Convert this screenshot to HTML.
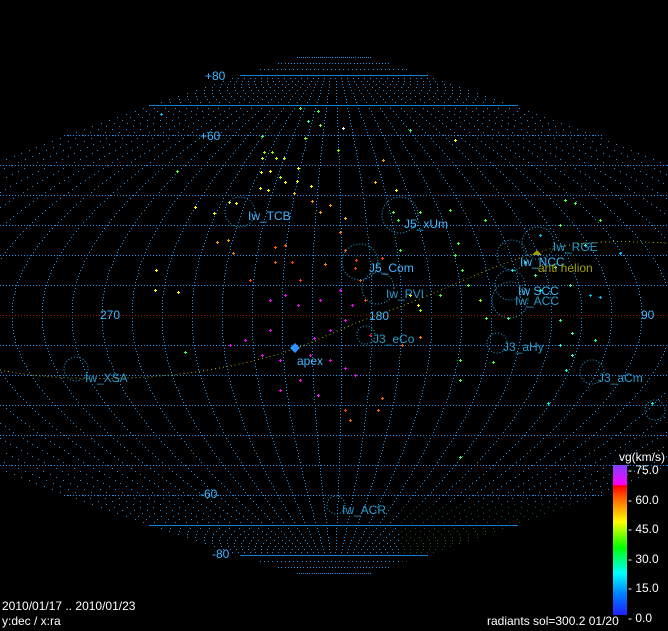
<!DOCTYPE html>
<html><head><meta charset="utf-8"><style>
html,body{margin:0;padding:0;background:#000;}
body{width:668px;height:631px;overflow:hidden;position:relative;font-family:"Liberation Sans",sans-serif;}
svg{position:absolute;left:0;top:0;}
text{font-family:"Liberation Sans",sans-serif;font-size:12px;}
</style></head><body>
<svg id="s" width="668" height="631" xmlns="http://www.w3.org/2000/svg" shape-rendering="crispEdges">
<defs><linearGradient id="cb" x1="0" y1="0" x2="0" y2="1">
<stop offset="0" stop-color="#8040ff"/><stop offset="0.13" stop-color="#ff00ff"/>
<stop offset="0.14" stop-color="#ff0000"/><stop offset="0.22" stop-color="#ff6000"/>
<stop offset="0.38" stop-color="#ffff00"/><stop offset="0.55" stop-color="#00ff00"/>
<stop offset="0.72" stop-color="#00ffff"/><stop offset="0.86" stop-color="#0080ff"/>
<stop offset="1" stop-color="#2020ff"/></linearGradient></defs>
<g id="grid"></g>
<path d="M0,370 C60,382 150,382 230,366 S320,335 380,314 S470,275 520,258 S600,240 668,243" fill="none" stroke="#a0a000" stroke-width="1" stroke-dasharray="1 3"/>
<g id="pts"></g>
<g fill="none" stroke="#20a8e0" stroke-dasharray="1 2" shape-rendering="auto">
<circle cx="240" cy="212" r="15"/><circle cx="400" cy="215" r="18"/><circle cx="538" cy="243" r="16"/>
<circle cx="512" cy="255" r="15"/><circle cx="360" cy="262" r="18"/><circle cx="378" cy="288" r="16"/>
<circle cx="510" cy="285" r="15"/><circle cx="510" cy="300" r="18"/><circle cx="366" cy="335" r="9"/>
<circle cx="497" cy="343" r="10"/><circle cx="592" cy="372" r="12"/><circle cx="76" cy="369" r="12"/>
<circle cx="336" cy="505" r="9"/><circle cx="655" cy="410" r="10"/>
</g>
<polygon points="532,255 537,250 542,255" fill="#a0a000" shape-rendering="auto"/>
<polygon points="295,343 300,348 295,353 290,348" fill="#3090ff" shape-rendering="auto"/>
<g fill="#40b8ff">
<text x="248" y="220">Iw_TCB</text><text x="404" y="228">J5_xUm</text>
<text x="520" y="266">Iw_NCC</text><text x="369" y="272">J5_Com</text>
<text x="518" y="295">Iw SCC</text><text x="297" y="365">apex</text>
<text x="205" y="80">+80</text><text x="200" y="140">+60</text>
<text x="100" y="319">270</text><text x="369" y="320">180</text><text x="641" y="319">90</text>
<text x="200" y="498">-60</text><text x="212" y="558">-80</text>
</g>
<g fill="#2898c8">
<text x="553" y="251">Iw_RGE</text><text x="386" y="298">Iw_PVI</text><text x="515" y="305">Iw_ACC</text>
<text x="373" y="343">J3_eCo</text><text x="503" y="351">J3_aHy</text><text x="598" y="382">J3_aCm</text>
<text x="85" y="382">Iw_XSA</text><text x="342" y="514">Iw_ACR</text>
</g>
<text x="538" y="272" fill="#a0a000">anti helion</text>
<rect x="613" y="465" width="14" height="150" fill="url(#cb)"/>
<g fill="#fff">
<text x="619" y="461">vg(km/s)</text>
<text x="628" y="474">- 75.0</text><text x="628" y="504">- 60.0</text><text x="628" y="533">- 45.0</text>
<text x="628" y="563">- 30.0</text><text x="628" y="592">- 15.0</text><text x="628" y="622">- 0.0</text>
<text x="2" y="610">2010/01/17 .. 2010/01/23</text><text x="2" y="625">y:dec / x:ra</text>
<text x="487" y="625">radiants sol=300.2 01/20</text>
</g>
</svg>
<script>
var g=document.getElementById('grid'),h='';
var C='#1890f0';
function P(ra,dec){var d=ra-192.5;while(d>180)d-=360;while(d<-180)d+=360;return [334-3*d*Math.cos(dec*Math.PI/180),315-3*dec];}
for(var ra=0;ra<360;ra+=10){for(var dec=-87;dec<=87;dec+=1){if(Math.abs(dec)>80&&dec%2)continue;var p=P(ra,dec);if(p[0]<0||p[0]>667)continue;h+='<rect x="'+Math.round(p[0])+'" y="'+p[1]+'" width="1" height="1" fill="'+(dec<-62&&p[0]>400?'#106020':C)+'"/>';}}
for(var dec=-80;dec<=80;dec+=10){var y=315-3*dec,w=540*Math.cos(dec*Math.PI/180),x0=Math.max(0,334-w),x1=Math.min(668,334+w);
if(Math.abs(dec)>=70){h+='<rect x="'+x0.toFixed(0)+'" y="'+y+'" width="'+(x1-x0).toFixed(0)+'" height="1" fill="#1080d0"/>';}
else{for(var x=x0;x<x1;x+=3)h+='<rect x="'+x.toFixed(0)+'" y="'+y+'" width="1" height="1" fill="'+(dec==0?'#a01010':C)+'"/>';}}
g.innerHTML=h;
var pts=[[300,108,'#40ff40'],[318,111,'#40ff40'],[161,114,'#00c0ff'],[308,121,'#40ff80'],[320,125,'#80ff40'],[262,136,'#40ff40'],[305,138,'#80ff00'],[264,152,'#80ff00'],[272,152,'#80ff00'],[276,158,'#c0ff00'],[284,158,'#c0ff00'],[262,158,'#c0ff00'],[177,171,'#40ff40'],[261,172,'#ffff00'],[270,171,'#ffff00'],[280,177,'#c0ff00'],[285,182,'#ffff00'],[297,181,'#ffff00'],[298,168,'#ffff00'],[311,186,'#ffff00'],[260,188,'#ffff00'],[268,190,'#ffff00'],[294,193,'#ffc000'],[312,201,'#ffa000'],[229,202,'#ffff00'],[214,213,'#ffff00'],[236,203,'#ffff00'],[195,207,'#ffff00'],[217,242,'#ffa000'],[228,240,'#ffa000'],[233,253,'#ff8000'],[275,247,'#ff6000'],[285,245,'#ff6000'],[292,262,'#ff4000'],[275,262,'#ff6000'],[320,212,'#ffa000'],[330,205,'#ffa000'],[345,218,'#ffc000'],[340,232,'#ff8000'],[345,250,'#ff6000'],[356,260,'#ff4000'],[355,268,'#ff4000'],[360,280,'#ff6000'],[325,264,'#ff8000'],[300,280,'#ff4000'],[270,300,'#ff00ff'],[285,295,'#ff00ff'],[298,305,'#ff00ff'],[320,300,'#ff00ff'],[340,290,'#ff00ff'],[352,305,'#ff00ff'],[345,320,'#ff00ff'],[330,330,'#ff00ff'],[314,338,'#ff00ff'],[270,330,'#ff00ff'],[245,340,'#ff00ff'],[262,355,'#ff00ff'],[280,360,'#ff00ff'],[310,355,'#ff00ff'],[330,360,'#ff00ff'],[345,368,'#ff00ff'],[355,375,'#ff00ff'],[300,380,'#ff00ff'],[280,390,'#ff00ff'],[318,395,'#ff20ff'],[345,410,'#ff4000'],[382,398,'#ff6000'],[378,410,'#ff6000'],[350,420,'#ff6000'],[402,345,'#ff6000'],[420,337,'#ff8000'],[365,300,'#ff4000'],[370,335,'#ff0040'],[400,250,'#40ff40'],[398,220,'#40ff40'],[393,212,'#40ff40'],[420,212,'#40ff40'],[458,243,'#40ff40'],[455,255,'#40ff40'],[462,270,'#40ff40'],[468,285,'#40ff40'],[480,300,'#80ff00'],[486,318,'#40ff40'],[512,270,'#00ffc0'],[525,262,'#40ff80'],[535,275,'#40ff80'],[540,290,'#00ffc0'],[555,267,'#40ffc0'],[570,285,'#40ff80'],[590,295,'#00c0ff'],[600,297,'#00c0ff'],[560,320,'#40ff80'],[572,333,'#40ffc0'],[560,345,'#00ffc0'],[572,355,'#40ffc0'],[595,340,'#00ffc0'],[585,245,'#40ffc0'],[560,225,'#40ff40'],[575,203,'#40ff40'],[600,220,'#40ff40'],[540,235,'#00c0ff'],[620,253,'#00c0ff'],[565,200,'#40ff40'],[450,210,'#40ff40'],[485,220,'#40ff40'],[410,295,'#ffff00'],[418,305,'#ffff00'],[420,310,'#80ff00'],[440,295,'#40ff40'],[460,360,'#40ff40'],[460,380,'#40ff40'],[493,362,'#40ff40'],[508,318,'#40ff80'],[566,370,'#00ffc0'],[548,403,'#00ffc0'],[652,403,'#00ffc0'],[460,457,'#40ff40'],[250,280,'#ff4000'],[155,290,'#ffff00'],[156,270,'#ffff00'],[178,292,'#ffff00'],[185,352,'#40ff40'],[230,345,'#ff00ff'],[382,258,'#ff4000'],[375,182,'#ffc000'],[383,160,'#ffa000'],[396,190,'#ffff00'],[455,140,'#ffff00'],[343,128,'#ffffff'],[410,130,'#40ff40'],[338,150,'#80ff00']];
var s='';pts.forEach(function(p){s+='<rect x="'+(p[0]-1)+'" y="'+p[1]+'" width="3" height="1" fill="'+p[2]+'"/><rect x="'+p[0]+'" y="'+(p[1]-1)+'" width="1" height="3" fill="'+p[2]+'"/>';});
document.getElementById('pts').innerHTML=s;
</script>
</body></html>
